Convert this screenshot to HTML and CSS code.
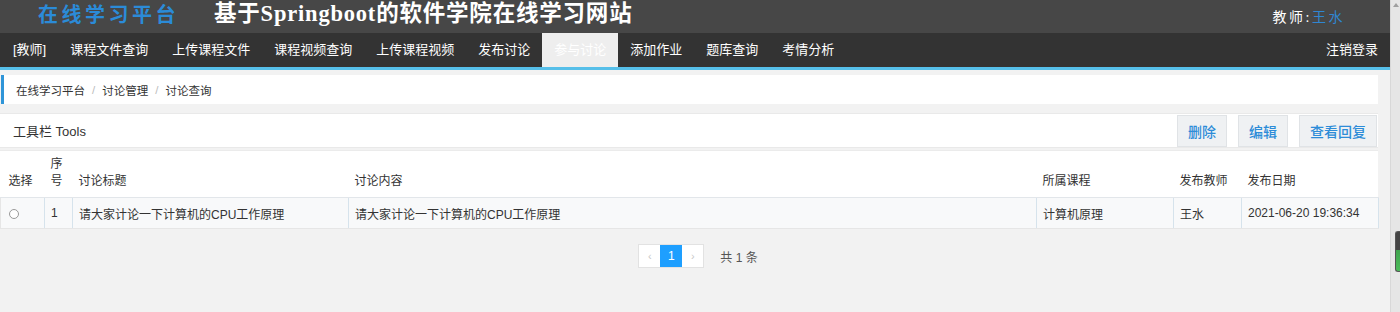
FILE: index.html
```html
<!DOCTYPE html>
<html lang="zh-CN">
<head>
<meta charset="utf-8">
<title>讨论查询</title>
<link rel="stylesheet" href="styles.css">
</head>
<body>
<div class="screen">
  <div class="page">
    <header class="top">
      <div class="brand">在线学习平台</div>
      <div class="site-title">基于Springboot的软件学院在线学习网站</div>
      <div class="user">教师:<span class="user-name">王水</span></div>
    </header>
    <nav class="nav">
      <ul class="nav-list">
        <li class="nav-item">[教师]</li>
        <li class="nav-item">课程文件查询</li>
        <li class="nav-item">上传课程文件</li>
        <li class="nav-item">课程视频查询</li>
        <li class="nav-item">上传课程视频</li>
        <li class="nav-item">发布讨论</li>
        <li class="nav-item active">参与讨论</li>
        <li class="nav-item">添加作业</li>
        <li class="nav-item">题库查询</li>
        <li class="nav-item">考情分析</li>
      </ul>
      <ul class="nav-list">
        <li class="nav-item">注销登录</li>
      </ul>
    </nav>
    <main class="content">
      <div class="crumb">
        <span>在线学习平台</span><span class="sep">/</span><span>讨论管理</span><span class="sep">/</span><span>讨论查询</span>
      </div>
      <div class="toolbar">
        <span class="toolbar-title">工具栏 Tools</span>
        <div class="toolbar-btns">
          <button class="btn">删除</button>
          <button class="btn">编辑</button>
          <button class="btn">查看回复</button>
        </div>
      </div>
      <div class="grid-panel">
        <table class="grid">
          <colgroup>
            <col class="c-sel"><col class="c-no"><col class="c-title"><col class="c-body"><col class="c-course"><col class="c-teacher"><col class="c-date">
          </colgroup>
          <thead>
            <tr>
              <th class="first">选择</th>
              <th>序号</th>
              <th>讨论标题</th>
              <th>讨论内容</th>
              <th>所属课程</th>
              <th>发布教师</th>
              <th>发布日期</th>
            </tr>
          </thead>
          <tbody>
            <tr>
              <td class="first"><input class="radio" type="radio" name="sel"></td>
              <td>1</td>
              <td>请大家计论一下计算机的CPU工作原理</td>
              <td>请大家计论一下计算机的CPU工作原理</td>
              <td>计算机原理</td>
              <td>王水</td>
              <td>2021-06-20 19:36:34</td>
            </tr>
          </tbody>
        </table>
      </div>
      <div class="pager">
        <div class="pages">
          <span class="pg pg-arrow">&lsaquo;</span>
          <span class="pg pg-cur">1</span>
          <span class="pg pg-arrow">&rsaquo;</span>
        </div>
        <span class="pg-count">共 1 条</span>
      </div>
    </main>
  </div>
  <div class="scrollbar">
    <span class="sb-arrow"></span>
    <span class="sb-widget"></span>
  </div>
</div>
</body>
</html>
```

FILE: styles.css
```css
* { box-sizing: border-box; }

body {
  margin: 0;
  background: #f2f2f2;
  font-family: "Liberation Sans", "Noto Sans CJK SC", sans-serif;
  color: #333;
}

.screen {
  display: flex;
  width: 1400px;
  height: 312px;
  overflow: hidden;
}

.page {
  width: 1390px;
  flex: none;
}

/* header */
.top {
  height: 33px;
  background: #474747;
  display: flex;
  align-items: flex-start;
  padding: 0 45px 0 38px;
}

.brand {
  font-family: "Noto Sans CJK SC", sans-serif;
  font-weight: bold;
  font-size: 20px;
  line-height: 28px;
  letter-spacing: 3.5px;
  color: #2b8bd8;
}

.site-title {
  margin-left: 35px;
  font-family: "Liberation Serif", "Noto Sans CJK SC", serif;
  font-weight: bold;
  font-size: 22.5px;
  line-height: 28px;
  letter-spacing: 0.8px;
  color: #fff;
}

.user {
  margin-left: auto;
  font-family: "Liberation Serif", "Noto Sans CJK SC", serif;
  font-size: 14px;
  line-height: 35px;
  letter-spacing: 2.5px;
  color: #fff;
}

.user-name { color: #2f86d2; }

/* nav */
.nav {
  height: 37px;
  background: #333;
  border-bottom: 3px solid #56bfe9;
  display: flex;
  justify-content: space-between;
  padding-left: 1px;
}

.nav-list {
  list-style: none;
  margin: 0;
  padding: 0;
  display: flex;
}

.nav-item {
  padding: 0 12px;
  font-size: 13px;
  line-height: 34px;
  color: #fff;
}

.nav-item.active { background: #eee; }

/* content */
.content {
  padding: 5px 12px 0 0;
}

.crumb {
  height: 29px;
  background: #fff;
  border-left: 3px solid #2f95d8;
  margin-left: 1px;
  display: flex;
  align-items: center;
  padding-left: 12px;
  font-size: 11.5px;
  color: #333;
}

.sep {
  color: #bbb;
  margin: 0 7px;
}

.toolbar {
  margin-top: 9px;
  height: 35px;
  background: #fff;
  border-top: 1px solid #e9e9e9;
  border-bottom: 1px solid #e9e9e9;
  display: flex;
  align-items: center;
  justify-content: space-between;
  padding: 0 1px 0 13px;
}

.toolbar-title { font-size: 13px; color: #333; }

.toolbar-btns {
  display: flex;
  gap: 11px;
}

.btn {
  height: 32px;
  padding: 0 10px;
  background: #eff1f3;
  border: 1px solid #e0e3e6;
  font-family: "Noto Sans CJK SC", sans-serif;
  font-size: 14px;
  font-weight: 500;
  color: #2d8cd8;
}

.grid-panel {
  margin-top: 2px;
  background: #fff;
  border-top: 1px solid #ebebeb;
}

.grid {
  width: 1378px;
  table-layout: fixed;
  border-collapse: collapse;
  font-size: 12px;
}

.c-sel { width: 44px; }
.c-no { width: 28px; }
.c-title { width: 276px; }
.c-body { width: 688px; }
.c-course { width: 137px; }
.c-teacher { width: 68px; }
.c-date { width: 137px; }

.grid th {
  text-align: left;
  vertical-align: bottom;
  font-weight: normal;
  padding: 5px 6px 7px;
  line-height: 17px;
  color: #333;
  border-bottom: 1px solid #e2e6ea;
}

.grid th.first, .grid td.first { padding-left: 8px; }

.grid td {
  height: 31px;
  padding: 0 6px;
  background: #f8f9fa;
  border-left: 1px solid #d6e3ec;
  border-right: 1px solid #d6e3ec;
  border-bottom: 1px solid #e6e6e6;
  white-space: nowrap;
  color: #333;
}

.grid td.first { border-left: 1px solid #e6e6e6; }

.radio {
  appearance: none;
  -webkit-appearance: none;
  width: 10px;
  height: 10px;
  margin: 0;
  border: 1px solid #999;
  border-radius: 50%;
  background: #fff;
  vertical-align: middle;
}

/* pager */
.pager {
  margin-top: 15px;
  display: flex;
  align-items: center;
  justify-content: center;
  padding-left: 18px;
  gap: 16px;
}

.pages {
  display: flex;
  border: 1px solid #e2e2e2;
  background: #fff;
}

.pg {
  width: 21px;
  height: 22px;
  display: flex;
  align-items: center;
  justify-content: center;
  font-size: 12px;
}

.pg-arrow { color: #c8c8c8; font-size: 11px; }
.pg-cur { width: 22px; background: #1e9fff; color: #fff; }

.pg-count { font-size: 12px; color: #555; }

/* scrollbar strip */
.scrollbar {
  width: 10px;
  flex: none;
  background: #e6e6e6;
  border-left: 1px solid #d8d8d8;
  position: relative;
}

.sb-arrow {
  position: absolute;
  top: 3px;
  left: 2px;
  width: 0;
  height: 0;
  border-left: 3px solid transparent;
  border-right: 3px solid transparent;
  border-bottom: 4px solid #a0a0a0;
}

.sb-widget {
  position: absolute;
  top: 231px;
  left: 4px;
  width: 6px;
  height: 41px;
  border: 1px solid #555;
  border-right: none;
  border-radius: 3px 0 0 3px;
  background: linear-gradient(#444 0, #444 45%, #3fa34d 45%, #4cbb5a 100%);
}
```
